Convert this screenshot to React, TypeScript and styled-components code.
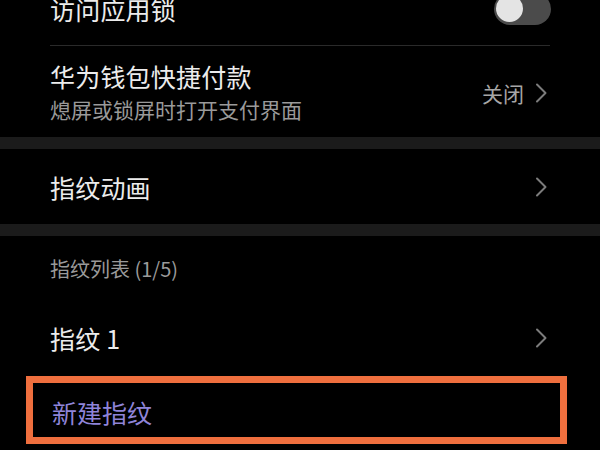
import React from "react";
import styled, { createGlobalStyle } from "styled-components";

const GlobalStyle = createGlobalStyle`
  html, body {
    margin: 0;
    padding: 0;
    background: #000;
    overflow: hidden;
  }
  body {
    font-family: "Noto Sans CJK SC", "Noto Sans", sans-serif;
  }
`;

const Chevron: React.FC = () => (
  <ChevronIcon width="14" height="20" viewBox="0 0 14 20">
    <path d="M3 1.5 L11.5 10 L3 18.5" />
  </ChevronIcon>
);

const App: React.FC = () => (
  <>
    <GlobalStyle />
    <Screen>
      <Row height={73}>
        <Title>访问应用锁</Title>
        <Toggle>
          <Knob />
        </Toggle>
      </Row>
      <Divider />
      <Row height={91}>
        <TextStack>
          <Title>华为钱包快捷付款</Title>
          <Subtitle>熄屏或锁屏时打开支付界面</Subtitle>
        </TextStack>
        <Trailing>
          <Value>关闭</Value>
          <Chevron />
        </Trailing>
      </Row>
      <Gap />
      <Row height={75}>
        <Title>指纹动画</Title>
        <Chevron />
      </Row>
      <Gap />
      <SectionHeader>指纹列表 (1/5)</SectionHeader>
      <Row height={76}>
        <Title>指纹 1</Title>
        <Chevron />
      </Row>
      <HighlightRow>
        <Action>新建指纹</Action>
      </HighlightRow>
    </Screen>
  </>
);

export default App;

const Screen = styled.div`
  width: 600px;
  height: 450px;
  background: #000;
  display: flex;
  flex-direction: column;
  overflow: hidden;
`;

const Row = styled.div<{ height: number }>`
  flex: none;
  height: ${(p) => p.height}px;
  display: flex;
  align-items: center;
  justify-content: space-between;
  padding: 0 50px;
  box-sizing: border-box;

  &:first-child {
    margin-top: -28px;
  }
`;

const Title = styled.span`
  color: #ececec;
  font-size: 25px;
  line-height: 34px;
  letter-spacing: 0.2px;
`;

const TextStack = styled.div`
  display: flex;
  flex-direction: column;
  gap: 1px;
`;

const Subtitle = styled.span`
  color: #9a9a9a;
  font-size: 21px;
  line-height: 30px;
`;

const Trailing = styled.div`
  display: flex;
  align-items: center;
  gap: 10px;
  margin-top: 2px;
`;

const Value = styled.span`
  color: #a6a6a6;
  font-size: 21px;
  line-height: 30px;
`;

const ChevronIcon = styled.svg`
  flex: none;
  margin-right: 2px;

  path {
    fill: none;
    stroke: #7c7c7c;
    stroke-width: 2;
    stroke-linecap: round;
    stroke-linejoin: round;
  }
`;

const Toggle = styled.div`
  width: 57px;
  height: 32px;
  border-radius: 16px;
  background: #4b4b4b;
  display: flex;
  align-items: center;
  padding: 0 2px;
  box-sizing: border-box;
  margin-right: -1px;
`;

const Knob = styled.div`
  width: 27px;
  height: 27px;
  border-radius: 50%;
  background: #e4e4e4;
`;

const Divider = styled.div`
  flex: none;
  height: 1px;
  margin: 0 50px;
  background: #2a2a2a;
`;

const Gap = styled.div`
  flex: none;
  height: 12px;
  background: #1b1b1b;
`;

const SectionHeader = styled.div`
  flex: none;
  height: 64px;
  display: flex;
  align-items: center;
  padding: 0 50px;
  color: #9a9a9a;
  font-size: 20px;
  box-sizing: border-box;
`;

const HighlightRow = styled.div`
  flex: none;
  width: 541px;
  height: 68px;
  margin-left: 26px;
  border: 7px solid #ef6f3e;
  box-sizing: border-box;
  display: flex;
  align-items: center;
  padding: 3px 0 0 19px;
`;

const Action = styled.span`
  color: #8f84d8;
  font-size: 25px;
  line-height: 34px;
`;
